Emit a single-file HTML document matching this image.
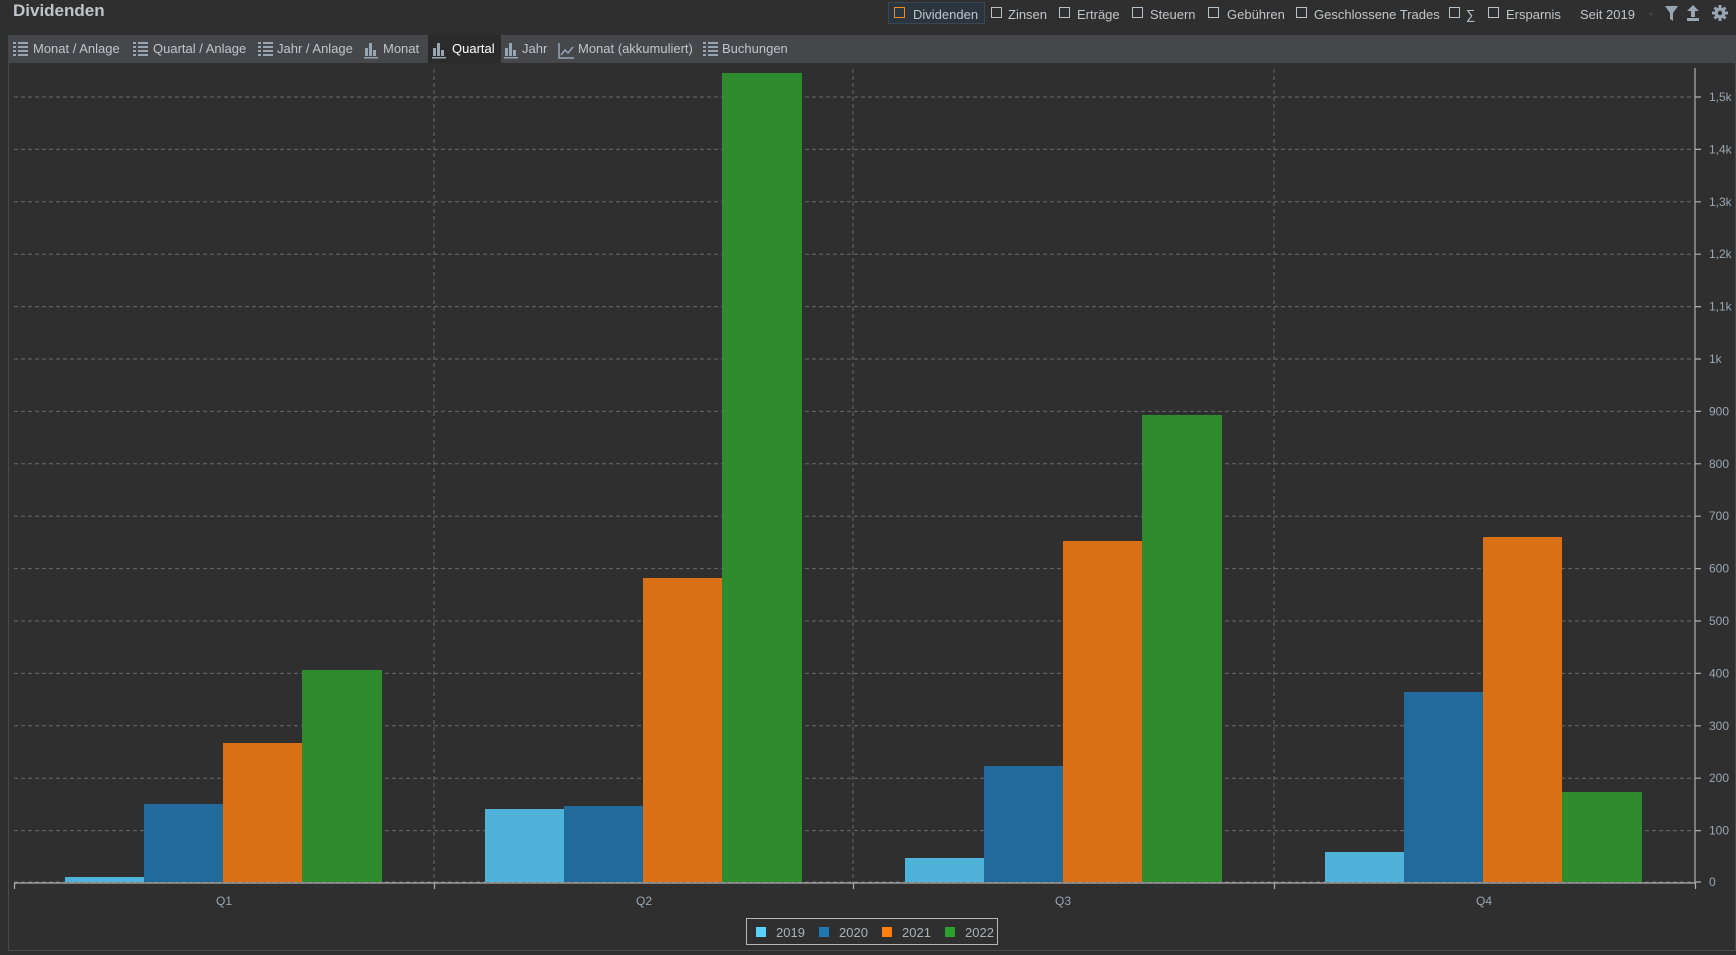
<!DOCTYPE html>
<html><head><meta charset="utf-8"><style>
*{margin:0;padding:0;box-sizing:border-box}
body{width:1736px;height:955px;background:#2f2f2f;font-family:"Liberation Sans",sans-serif;color:#c4c8cc;position:relative;overflow:hidden}
.a{position:absolute;white-space:nowrap}
.title{left:13px;top:1px;font-size:17px;font-weight:bold;color:#c0c4c8}
.tb{position:absolute;left:8px;top:35px;width:1728px;height:28px;background:#46474b}
.tab{position:absolute;top:35px;height:28px;line-height:28px;font-size:13px;color:#c0c6cc}
.act{background:#2b2b2b;color:#fff}
.top{position:absolute;top:5px;height:20px;line-height:20px;font-size:13px;color:#c0c6cc}
.cb{position:absolute;top:7px;width:11px;height:11px;border:1.5px solid #b8c0c8}
</style></head><body>
<div class="a title">Dividenden</div>
<div class="tb"></div>
<div class="tab act" style="left:428px;width:73px"></div>
<svg class="a" style="left:0;top:35px" width="800" height="28">
<g fill="#98a6b4">
<g id="li"><rect x="13" y="7" width="3" height="2"/><rect x="13" y="11" width="3" height="2"/><rect x="13" y="15" width="3" height="2"/><rect x="13" y="19" width="3" height="2"/><rect x="18" y="7" width="10" height="2"/><rect x="18" y="11" width="10" height="2"/><rect x="18" y="15" width="10" height="2"/><rect x="18" y="19" width="10" height="2"/></g>
<use href="#li" x="120"/><use href="#li" x="245"/><use href="#li" x="690"/>
<g id="bc"><rect x="365" y="13" width="3" height="8"/><rect x="369" y="8" width="3" height="13"/><rect x="373" y="15" width="3" height="6"/><rect x="364" y="22" width="14" height="1.5"/></g>
<use href="#bc" x="68"/><use href="#bc" x="140"/>
<path d="M559 8v15h15" stroke="#98a6b4" fill="none" stroke-width="1.5"/><path d="M561 20l4-5 3 3 5-6" stroke="#98a6b4" fill="none" stroke-width="1.5"/>
</g></svg>
<div class="tab" style="left:33px">Monat / Anlage</div>
<div class="tab" style="left:153px">Quartal / Anlage</div>
<div class="tab" style="left:277px">Jahr / Anlage</div>
<div class="tab" style="left:383px">Monat</div>
<div class="tab" style="left:452px;color:#fff">Quartal</div>
<div class="tab" style="left:522px">Jahr</div>
<div class="tab" style="left:578px">Monat (akkumuliert)</div>
<div class="tab" style="left:722px">Buchungen</div>

<div class="a" style="left:888px;top:2px;width:97px;height:22px;background:#2a3540;border:1px solid #3a4650"></div>
<div class="cb" style="left:894px;border-color:#f08a1a"></div><div class="top" style="left:913px">Dividenden</div>
<div class="cb" style="left:991px"></div><div class="top" style="left:1008px">Zinsen</div>
<div class="cb" style="left:1059px"></div><div class="top" style="left:1077px">Erträge</div>
<div class="cb" style="left:1132px"></div><div class="top" style="left:1150px">Steuern</div>
<div class="cb" style="left:1208px"></div><div class="top" style="left:1227px">Gebühren</div>
<div class="cb" style="left:1296px"></div><div class="top" style="left:1314px">Geschlossene Trades</div>
<div class="cb" style="left:1449px"></div><div class="top" style="left:1466px">∑</div>
<div class="cb" style="left:1488px"></div><div class="top" style="left:1506px">Ersparnis</div>
<div class="top" style="left:1580px">Seit 2019</div>
<svg class="a" style="left:1640px;top:0" width="96" height="30">
<path d="M8 13l3 3 3-3z" fill="#444"/>
<g fill="#98a6b4"><path d="M25 6h13l-5 7v8l-3-2v-6z"/><path d="M53 5l-6 6h4v6h4v-6h4z"/><rect x="47" y="18" width="12" height="3"/>
<circle cx="80" cy="13" r="5.5"/><g stroke="#98a6b4" stroke-width="3"><path d="M80 5v16M72 13h16M74.5 7.5l11 11M85.5 7.5l-11 11"/></g></g>
<circle cx="80" cy="13" r="2.2" fill="#2f2f2f"/></svg>

<div class="a" style="left:8px;top:63px;width:1728px;height:888px;border:1px solid #4a4a4a;border-top:none"></div>
<svg class="a" style="left:0;top:0" width="1736" height="955" font-family="Liberation Sans, sans-serif">
<g stroke="#6a6a6a" stroke-dasharray="4,3" stroke-width="1">
<path d="M14 830.6H1694M14 778.2H1694M14 725.8H1694M14 673.4H1694M14 621H1694M14 568.6H1694M14 516.2H1694M14 463.8H1694M14 411.4H1694M14 359H1694M14 306.6H1694M14 254.2H1694M14 201.8H1694M14 149.4H1694M14 97H1694M14 882H1694"/>
<path d="M434 69V882M853 69V882M1274 69V882"/>
</g>
<g id="bars">
<rect x="65" y="877" width="79" height="5" fill="#4fb3d9"/>
<rect x="144" y="804" width="79" height="78" fill="#226a9c"/>
<rect x="223" y="743" width="79" height="139" fill="#d97015"/>
<rect x="302" y="670" width="80" height="212" fill="#2e8b2e"/>
<rect x="485" y="809" width="79" height="73" fill="#4fb3d9"/>
<rect x="564" y="806" width="79" height="76" fill="#226a9c"/>
<rect x="643" y="578" width="79" height="304" fill="#d97015"/>
<rect x="722" y="73" width="80" height="809" fill="#2e8b2e"/>
<rect x="905" y="858" width="79" height="24" fill="#4fb3d9"/>
<rect x="984" y="766" width="79" height="116" fill="#226a9c"/>
<rect x="1063" y="541" width="79" height="341" fill="#d97015"/>
<rect x="1142" y="415" width="80" height="467" fill="#2e8b2e"/>
<rect x="1325" y="852" width="79" height="30" fill="#4fb3d9"/>
<rect x="1404" y="692" width="79" height="190" fill="#226a9c"/>
<rect x="1483" y="537" width="79" height="345" fill="#d97015"/>
<rect x="1562" y="792" width="80" height="90" fill="#2e8b2e"/>
</g>
<g stroke="#b0b0b0" stroke-width="1.2" fill="none">
<path d="M14 883H1695M1695 68V883"/>
<path d="M14.5 883v6M434.5 883v6M853.5 883v6M1274.5 883v6M1695.5 883v6"/>
<path d="M1695 882h6M1695 830.6h6M1695 778.2h6M1695 725.8h6M1695 673.4h6M1695 621h6M1695 568.6h6M1695 516.2h6M1695 463.8h6M1695 411.4h6M1695 359h6M1695 306.6h6M1695 254.2h6M1695 201.8h6M1695 149.4h6M1695 97h6"/>
</g>
<g fill="#9aa6b2" font-size="12">
<text x="1709" y="886">0</text><text x="1709" y="834.6">100</text><text x="1709" y="782.2">200</text><text x="1709" y="729.8">300</text><text x="1709" y="677.4">400</text><text x="1709" y="625">500</text><text x="1709" y="572.6">600</text><text x="1709" y="520.2">700</text><text x="1709" y="467.8">800</text><text x="1709" y="415.4">900</text><text x="1709" y="363">1k</text><text x="1709" y="310.6">1,1k</text><text x="1709" y="258.2">1,2k</text><text x="1709" y="205.8">1,3k</text><text x="1709" y="153.4">1,4k</text><text x="1709" y="101">1,5k</text>
<g text-anchor="middle"><text x="224" y="905">Q1</text><text x="644" y="905">Q2</text><text x="1063" y="905">Q3</text><text x="1484" y="905">Q4</text></g>
</g>
<rect x="746.5" y="918.5" width="251" height="26" fill="none" stroke="#b8b8b8"/>
<rect x="756" y="927" width="10" height="10" fill="#5bd0ff"/><rect x="819" y="927" width="10" height="10" fill="#1f78b4"/><rect x="882" y="927" width="10" height="10" fill="#ff7f0e"/><rect x="945" y="927" width="10" height="10" fill="#2ca02c"/>
<g fill="#aab2ba" font-size="13"><text x="776" y="937">2019</text><text x="839" y="937">2020</text><text x="902" y="937">2021</text><text x="965" y="937">2022</text></g>
</svg>
</body></html>
